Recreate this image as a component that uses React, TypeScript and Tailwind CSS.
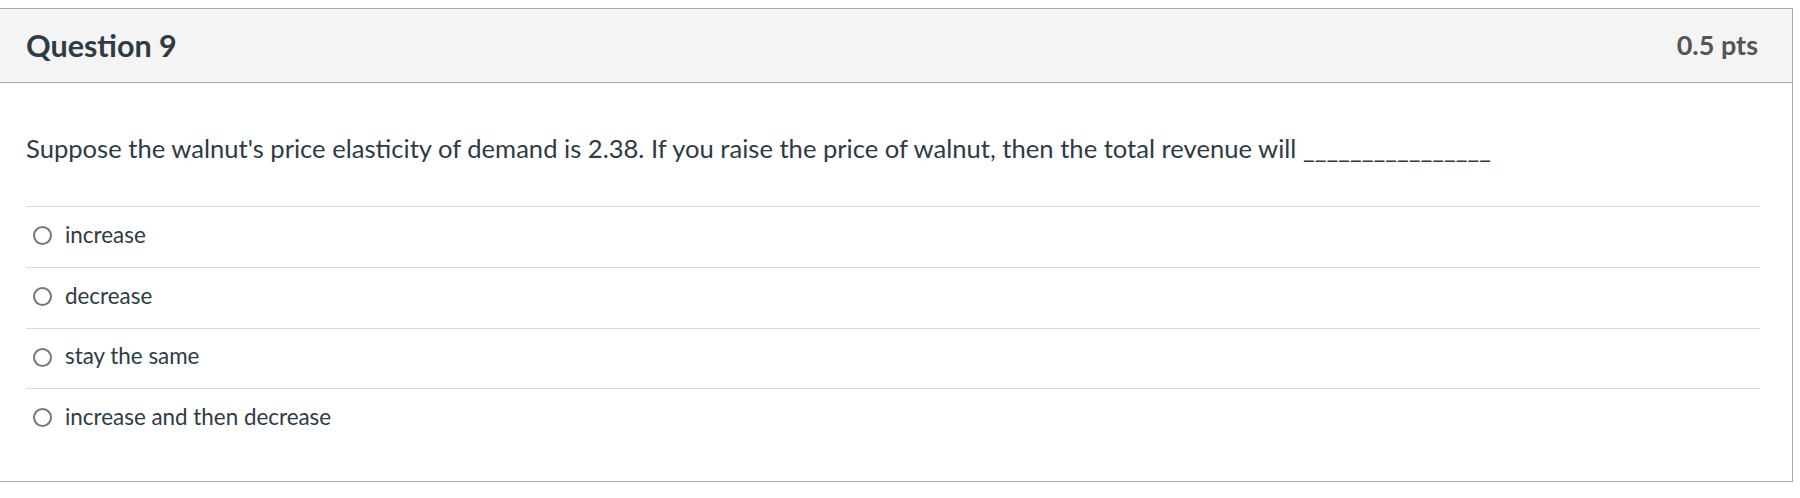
const options = ['increase', 'decrease', 'stay the same', 'increase and then decrease'];

export default function App() {
  return (
    <div className="min-h-screen bg-white pt-2 font-['Lato','Liberation_Sans',sans-serif] text-[#2d3b45]">
      <div className="w-[1793px] border border-l-0 border-[#a8a8a8] bg-white">
        <div className="flex h-[74px] items-center justify-between border-b border-[#a8a8a8] bg-[#f4f4f4] pl-[26px] pr-[34px]">
          <h2 className="text-[30.5px] font-bold">Question 9</h2>
          <span className="text-[27px] font-bold text-[#555]">0.5 pts</span>
        </div>
        <div className="pl-[26px] pr-[32px] pb-[32px]">
          <p className="pt-[47px] pb-[40px] text-[25.6px] leading-[36px]">
            Suppose the walnut's price elasticity of demand is 2.38. If you raise the price of walnut, then the total revenue will ________________
          </p>
          {options.map((opt, i) => (
            <label
              key={opt}
              className={`flex items-center border-t border-[#dcdcdc] pb-[5px] ${i === 2 ? 'h-[60px]' : 'h-[61px]'}`}
            >
              <span className="ml-[7px] mr-[13px] mt-[2px] h-[19px] w-[19px] rounded-full border-2 border-[#767676]" />
              <span className="text-[22.4px] leading-[28px]">{opt}</span>
            </label>
          ))}
        </div>
      </div>
    </div>
  );
}
